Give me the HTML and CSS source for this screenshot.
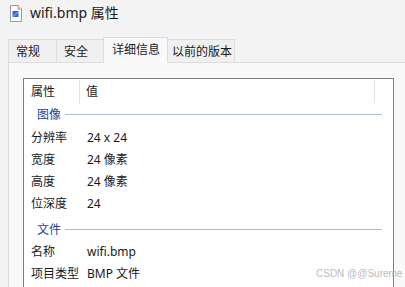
FILE: index.html
```html
<!DOCTYPE html>
<html>
<head>
<meta charset="utf-8">
<link rel="stylesheet" href="styles.css">
</head>
<body>
<div class="window">
  <div class="titlebar">
    <svg class="fileicon" width="14" height="17" viewBox="0 0 14 17">
      <path d="M1.5 0.5 H9 L12.5 4 V16.5 H1.5 Z" fill="#fff" stroke="#9a9a9a"/>
      <path d="M9 0.5 V4 H12.5" fill="#f0f0f0" stroke="#9a9a9a"/>
      <rect x="3.5" y="6" width="6" height="6" fill="#2f6fd6"/>
      <path d="M4 11.5 L9 7" stroke="#8fc0ff" stroke-width="1"/>
    </svg>
    <span class="title">wifi.bmp 属性</span>
  </div>
  <div class="tabs">
    <div class="tab t1">常规</div>
    <div class="tab t2">安全</div>
    <div class="tab active t3">详细信息</div>
    <div class="tab t4">以前的版本</div>
  </div>
  <div class="panel">
    <div class="list">
      <div class="row header">
        <div class="c1">属性</div>
        <div class="c2">值</div>
        <div class="div2"></div>
      </div>
      <div class="group first"><span>图像</span><i></i></div>
      <div class="row"><div class="c1">分辨率</div><div class="c2">24 x 24</div></div>
      <div class="row"><div class="c1">宽度</div><div class="c2">24 像素</div></div>
      <div class="row"><div class="c1">高度</div><div class="c2">24 像素</div></div>
      <div class="row"><div class="c1">位深度</div><div class="c2">24</div></div>
      <div class="group second"><span>文件</span><i></i></div>
      <div class="row"><div class="c1">名称</div><div class="c2">wifi.bmp</div></div>
      <div class="row"><div class="c1">项目类型</div><div class="c2">BMP 文件</div></div>
    </div>
  </div>
  <div class="watermark">CSDN @@Sureme</div>
</div>
</body>
</html>
```
FILE: styles.css
```css
html, body {
  margin: 0;
  padding: 0;
}
body {
  width: 405px;
  height: 287px;
  overflow: hidden;
  background: #f3f3f3;
  font-family: "Noto Sans", "Noto Sans CJK SC", sans-serif;
  color: #1a1a1a;
}
.window {
  position: relative;
  height: 287px;
  overflow: hidden;
}
.titlebar {
  height: 28px;
  display: flex;
  align-items: center;
  padding-left: 9px;
}
.fileicon {
  display: block;
  margin-top: -2px;
}
.title {
  margin-left: 7px;
  font-size: 14px;
  line-height: 20px;
  margin-top: -3px;
  color: #1a1a1a;
}
.tabs {
  display: flex;
  align-items: flex-end;
  padding-left: 8px;
  margin-top: 9px;
  height: 25px;
  position: relative;
  z-index: 1;
}
.tab {
  box-sizing: border-box;
  height: 23px;
  border: 1px solid #dcdcdc;
  border-bottom: none;
  background: #f0f0f0;
  font-size: 12px;
  line-height: 22px;
  padding-left: 7px;
  margin-right: -1px;
  font-family: "Noto Sans CJK SC", sans-serif;
}
.t1 { width: 49px; }
.t2 { width: 48px; }
.t3 { width: 65px; }
.t4 { width: 68px; padding-left: 4px; }
.tab.active {
  height: 26px;
  margin-bottom: -1px;
  background: #f9f9f9;
  line-height: 22px;
  padding-left: 8px;
}
.panel {
  margin-left: 8px;
  border: 1px solid #dcdcdc;
  border-right: none;
  border-bottom: none;
  background: #f9f9f9;
  height: 225px;
  box-sizing: border-box;
  padding: 15px 0 0 14px;
}
.list {
  width: 371px;
  height: 209px;
  box-sizing: border-box;
  border: 1px solid #7e7e7e;
  border-bottom: none;
  background: #fff;
  font-family: "Noto Sans", "Noto Sans CJK SC", sans-serif;
  font-size: 12px;
  padding-top: 1px;
}
.row {
  display: grid;
  grid-template-columns: 56px 1fr;
  height: 22px;
  line-height: 23px;
}
.row .c1 { padding-left: 7px; white-space: nowrap; }
.row .c2 { padding-left: 7px; white-space: nowrap; }
.row.header {
  height: 23px;
  line-height: 24px;
  position: relative;
}
.row.header .c1 {
  border-right: 1px solid #e3e3e3;
  margin: 0;
  line-height: 23px;
}
.row.header .c2 { padding-left: 6px; }
.div2 {
  position: absolute;
  left: 350px;
  top: 0;
  width: 1px;
  height: 23px;
  background: #e3e3e3;
}
.group {
  display: flex;
  align-items: center;
  height: 23px;
  padding-left: 13px;
  color: #1c3fa0;
}
.group.second {
  margin-top: 4px;
  height: 22px;
}
.group span { line-height: 22px; margin-top: 1px; }
.group i {
  display: block;
  height: 1px;
  background: #aabbe0;
  margin-left: 4px;
  width: 317px;
}
.watermark {
  position: absolute;
  left: 316px;
  top: 267px;
  font-family: "Liberation Sans", sans-serif;
  font-size: 10px;
  line-height: 14px;
  color: #bdbdbd;
  white-space: nowrap;
}
```
